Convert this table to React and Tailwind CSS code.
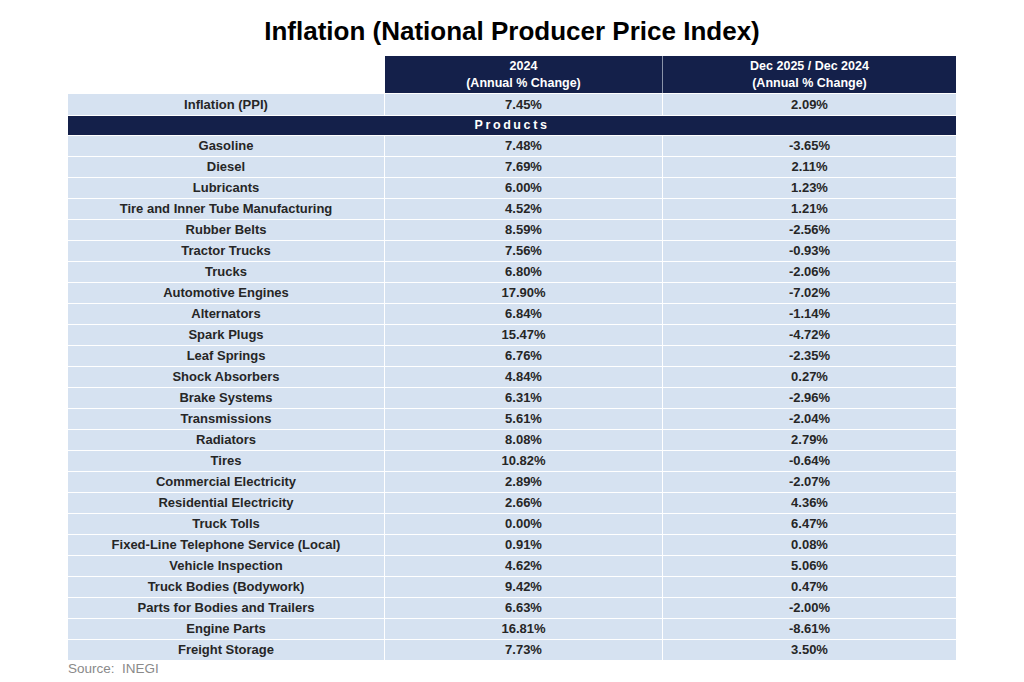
import React from 'react'

const rows = [
  ['Gasoline', '7.48%', '-3.65%'],
  ['Diesel', '7.69%', '2.11%'],
  ['Lubricants', '6.00%', '1.23%'],
  ['Tire and Inner Tube Manufacturing', '4.52%', '1.21%'],
  ['Rubber Belts', '8.59%', '-2.56%'],
  ['Tractor Trucks', '7.56%', '-0.93%'],
  ['Trucks', '6.80%', '-2.06%'],
  ['Automotive Engines', '17.90%', '-7.02%'],
  ['Alternators', '6.84%', '-1.14%'],
  ['Spark Plugs', '15.47%', '-4.72%'],
  ['Leaf Springs', '6.76%', '-2.35%'],
  ['Shock Absorbers', '4.84%', '0.27%'],
  ['Brake Systems', '6.31%', '-2.96%'],
  ['Transmissions', '5.61%', '-2.04%'],
  ['Radiators', '8.08%', '2.79%'],
  ['Tires', '10.82%', '-0.64%'],
  ['Commercial Electricity', '2.89%', '-2.07%'],
  ['Residential Electricity', '2.66%', '4.36%'],
  ['Truck Tolls', '0.00%', '6.47%'],
  ['Fixed-Line Telephone Service (Local)', '0.91%', '0.08%'],
  ['Vehicle Inspection', '4.62%', '5.06%'],
  ['Truck Bodies (Bodywork)', '9.42%', '0.47%'],
  ['Parts for Bodies and Trailers', '6.63%', '-2.00%'],
  ['Engine Parts', '16.81%', '-8.61%'],
  ['Freight Storage', '7.73%', '3.50%'],
]

function Cell({ children, className = '' }) {
  return (
    <div className={`bg-[#d6e2f1] flex items-center justify-center text-[13px] font-bold text-[#262626] ${className}`}>
      {children}
    </div>
  )
}

export default function App() {
  return (
    <div className="w-[1024px] h-[682px] bg-white font-['Liberation_Sans',Arial,sans-serif] overflow-hidden">
      <h1 className="text-center text-[26px] font-bold text-black pt-[16px] leading-[30px] h-[56px]">
        Inflation (National Producer Price Index)
      </h1>

      <div className="ml-[68px] w-[888px] grid grid-cols-[316px_277px_293px] gap-x-px gap-y-px bg-white">
        {/* Header */}
        <div className="h-[37px] bg-white" />
        <div className="h-[37px] bg-[#14204a] flex flex-col items-center justify-center text-white text-[12.5px] font-bold leading-[17px]">
          <span>2024</span>
          <span>(Annual % Change)</span>
        </div>
        <div className="h-[37px] bg-[#14204a] flex flex-col items-center justify-center text-white text-[12.5px] font-bold leading-[17px] border-l border-[#8a93a8] -ml-px">
          <span>Dec 2025 / Dec 2024</span>
          <span>(Annual % Change)</span>
        </div>

        {/* Headline */}
        <Cell className="h-[21px]">Inflation (PPI)</Cell>
        <Cell className="h-[21px]">7.45%</Cell>
        <Cell className="h-[21px]">2.09%</Cell>

        <div className="col-span-3 h-[19px] bg-[#14204a] flex items-center justify-center text-white text-[12.5px] font-bold tracking-[2.6px]">
          Products
        </div>

        {rows.map(([name, a, b]) => (
          <React.Fragment key={name}>
            <Cell className="h-[20px]">{name}</Cell>
            <Cell className="h-[20px]">{a}</Cell>
            <Cell className="h-[20px]">{b}</Cell>
          </React.Fragment>
        ))}
      </div>

      <p className="ml-[68px] mt-[1px] text-[13.5px] leading-[16px] text-[#8a8a8a]">Source:&nbsp; INEGI</p>
    </div>
  )
}
